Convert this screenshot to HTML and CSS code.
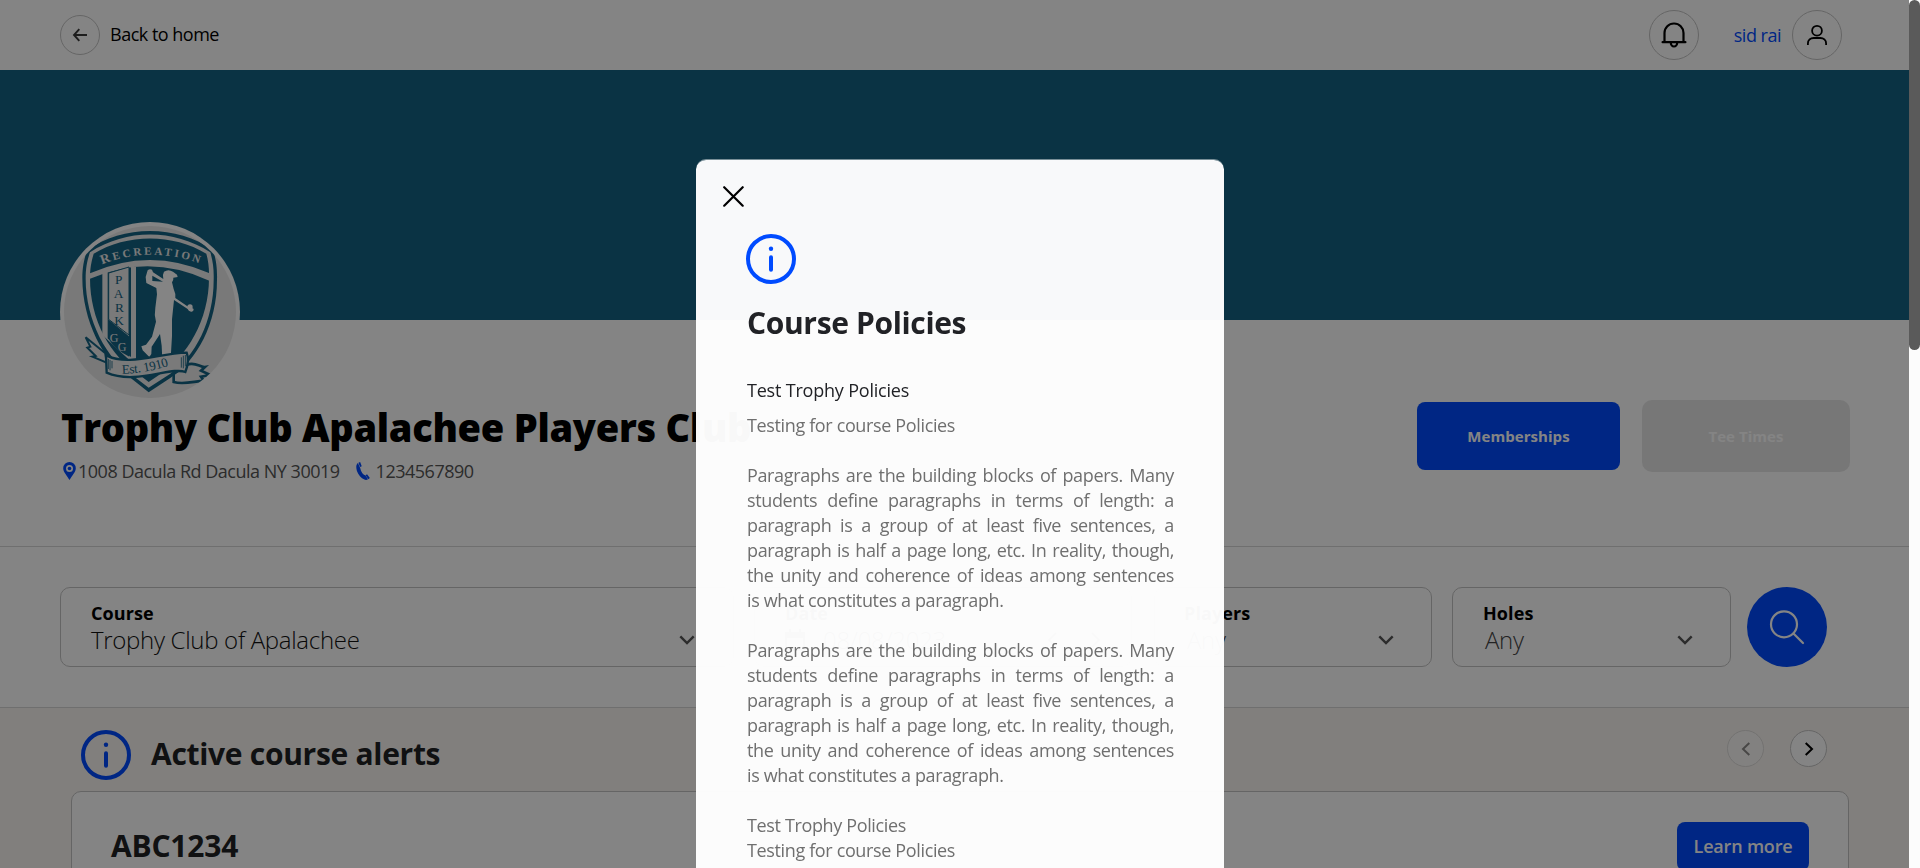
FILE: index.html
```html
<!DOCTYPE html>
<html lang="en">
<head>
<meta charset="utf-8">
<title>Trophy Club Apalachee Players Club</title>
<link rel="stylesheet" href="styles.css">
</head>
<body>
<div class="app">
  <div class="page">
    <header class="topbar">
      <div class="back">
        <span class="ring ring-back"><svg width="16" height="16" viewBox="0 0 16 16"><path d="M7.300 2.200 2 8l5.300 5.800M2 8h13" fill="none" stroke="#3a3a3a" stroke-width="1.900"/></svg></span>
        <span class="back-label">Back to home</span>
      </div>
      <div class="account">
        <span class="ring"><svg width="28" height="30" viewBox="0 0 28 30"><path d="M4.500 22V13a9.500 9.500 0 0 1 19 0v9" fill="none" stroke="#000" stroke-width="2.200"/><path d="M2.600 22.200h22.800" stroke="#000" stroke-width="2.200" stroke-linecap="round"/><path d="M10.800 22.500a3.200 4 0 0 0 6.400 0" fill="none" stroke="#000" stroke-width="2.200"/></svg></span>
        <span class="user-name">sid rai</span>
        <span class="ring"><svg width="24" height="24" viewBox="0 0 24 24"><circle cx="12" cy="7.700" r="4.900" fill="none" stroke="#000" stroke-width="1.800"/><path d="M2.900 22v-1.500c0-3.400 2.500-5.500 5.800-5.500h6.600c3.300 0 5.800 2.100 5.800 5.500V22" fill="none" stroke="#000" stroke-width="1.800"/></svg></span>
      </div>
    </header>

    <div class="hero"></div>

    <section class="club">
      <div class="crest">
        <svg width="180" height="180" viewBox="60 36 540 540">
          <defs>
            <path id="arc" d="M186 163Q330 106 480 161"/>
            <path id="rib" d="M246 491Q318 490 392 466"/>
            <clipPath id="disc"><circle cx="330" cy="306" r="258"/></clipPath>
          </defs>
          <circle cx="330" cy="306" r="270" fill="#fff"/>
          <circle cx="330" cy="306" r="258" fill="#e9e9e9"/>
          <g clip-path="url(#disc)">
            <path d="M326 547 272 504C190 460 127 330 127 205c0-40 8-65 14-84C250 44 410 44 520 121c8 30 12 50 11 90 0 130-60 240-139 292Z" fill="#156483"/>
            <path d="M326 533 280 498C200 450 137 330 137 207c0-32 4-55 13-80C260 56 400 56 511 127c8 28 11 50 10 84 0 120-55 230-130 280Z" fill="#ebebeb"/>
            <path d="M326 516 300 496C210 440 150 330 150 205c0-29 4-50 11-74C260 70 400 70 499 131c6 22 9 45 8 74 0 125-65 235-150 290Z" fill="#156483"/>
            <path d="M150 190Q330 110 509 190l-1 22Q330 128 150 206Z" fill="#ebebeb"/>
            <path d="M187 180h16v205l70 56V170h15v280h-20L187 375Z" fill="#ebebeb"/>
            <path d="M206 189 267 171v208l-61-50Z" fill="#ebebeb"/>
            <path d="M206 189 267 171v204l-61-47Z" fill="none" stroke="#156483" stroke-width="3"/>
            <path d="M204 330 268 408V440Q225 420 204 385Z" fill="#156483"/>
            <path d="M323 181q6-6 13-2l3 8 31 20q-4-12 2-22 13-9 27 0l12 9 2 7-13 2q1 9-4 14l5 20q7 15 5 27l47 32q6-3 8 2 0 8-8 7-8-2-10-8l-41-27-6 58v50l-3 50 8 20q-4 8-14 6l-20-4-2-43-5-35-25 38-1 22-6 9-20-20-4-12 14-5 18-24 12-45q-6-22-2-42l5-40-2-19-30-15-2-18Z" fill="#fff"/>
            <path d="M337 197v16l32 2Z" fill="#156483"/>
            <circle cx="450" cy="291" r="8" fill="#fff"/>
            <path d="M196 430 137 382l14 28-9 3 25 25-10 2 43 18Z" fill="#ebebeb" stroke="#156483" stroke-width="6"/>
            <path d="M440 465c25-12 40 8 55 6l-12 11 28 13-28 5 8 12c-30 2-60 13-90 4v-24Z" fill="#ebebeb" stroke="#156483" stroke-width="8"/>
            <path d="M198 436c70 34 155-6 242-8 8 20 3 40-4 58-40-18-150 40-236 2Z" fill="#ebebeb" stroke="#156483" stroke-width="7"/>
            <path d="M205 447v30M210 450v31M216 453v22M424 442v31M430 437v38M436 435v34" stroke="#156483" stroke-width="2.500"/>
          </g>
          <g class="crest-text">
            <text font-size="40" fill="#ebebeb"><textPath href="#arc" textLength="298">R<tspan font-size="33">ECREATION</tspan></textPath></text>
            <g class="crest-thin" font-size="40" fill="#156483" text-anchor="middle">
              <text x="236" y="223">P</text><text x="236" y="264">A</text><text x="238" y="305">R</text><text x="237" y="346">K</text>
              <text x="222" y="396" fill="#ebebeb" font-size="36">G</text><text x="246" y="424" fill="#ebebeb" font-size="36">G</text>
            </g>
            <text class="crest-thin" font-size="39" fill="#156483"><textPath href="#rib" textLength="143">Est. 1910</textPath></text>
          </g>
        </svg>
      </div>
      <div class="club-row">
        <div class="club-info">
          <h1 class="club-name">Trophy Club Apalachee Players Club</h1>
          <div class="contact">
            <svg class="pin" width="13" height="18" viewBox="0 0 13 18"><path fill-rule="evenodd" d="M6.500 0A6.300 6.300 0 0 0 .2 6.300C.2 10 3.500 13 6.500 18c3-5 6.300-8 6.300-11.700A6.300 6.300 0 0 0 6.500 0Zm0 3a3.500 3.500 0 1 1 0 7 3.500 3.500 0 0 1 0-7Z" fill="#004bff"/><circle cx="6.500" cy="6.500" r="1.800" fill="#004bff"/></svg>
            <span class="address">1008 Dacula Rd Dacula NY 30019</span>
            <svg class="phone" width="14" height="18" viewBox="0 0 14 18"><path d="M3.300.4 4.900 4.600M10.300 12.800l2.800 3.800" stroke="#004bff" stroke-width="1.800"/><path d="M1.900 1C0 2.500-.1 5.600.9 9c1.400 4 4.300 7.300 7.500 8.600 1.400.5 2.600.3 3.600-.3L9.300 13.300c-2.300-.3-4.300-3.500-5.100-7.200Z" fill="#004bff"/></svg>
            <span class="tel">1234567890</span>
          </div>
        </div>
        <div class="club-actions">
          <div class="btn btn-member">Memberships</div>
          <div class="btn btn-tee">Tee Times</div>
        </div>
      </div>
    </section>

    <section class="filters">
      <div class="field field-course">
        <div class="field-label">Course</div>
        <div class="field-line"><span class="value dark">Trophy Club of Apalachee</span><svg class="chev" width="16" height="10" viewBox="0 0 16 10"><path d="m1.300 1.300 6.700 6.700 6.700-6.700" fill="none" stroke="#555" stroke-width="2.400"/></svg></div>
      </div>
      <div class="field field-date">
        <div class="field-label">Date</div>
        <div class="field-line"><svg class="cal" width="20" height="22" viewBox="0 0 20 22"><path d="M1 4h18v17H1Z" fill="none" stroke="#555" stroke-width="2"/><path d="M0 3h20v6H0ZM4 0h2v4H4ZM14 0h2v4h-2Z" fill="#555"/></svg><span class="value dark">08/08/2023</span><span class="date-nav"><svg width="11" height="16" viewBox="0 0 11 16"><path d="m9 1-7 7 7 7" fill="none" stroke="#555" stroke-width="2"/></svg><svg width="11" height="16" viewBox="0 0 11 16"><path d="m2 1 7 7-7 7" fill="none" stroke="#555" stroke-width="2"/></svg></span></div>
      </div>
      <div class="field field-players">
        <div class="field-label">Players</div>
        <div class="field-line"><span class="value any">Any</span><svg class="chev" width="16" height="10" viewBox="0 0 16 10"><path d="m1.300 1.300 6.700 6.700 6.700-6.700" fill="none" stroke="#555" stroke-width="2.400"/></svg></div>
      </div>
      <div class="field field-holes">
        <div class="field-label">Holes</div>
        <div class="field-line"><span class="value any">Any</span><svg class="chev" width="16" height="10" viewBox="0 0 16 10"><path d="m1.300 1.300 6.700 6.700 6.700-6.700" fill="none" stroke="#555" stroke-width="2.400"/></svg></div>
      </div>
      <div class="search"><svg width="36" height="36" viewBox="0 0 36 36"><circle cx="15" cy="15.300" r="13" fill="none" stroke="#fff" stroke-width="2.200"/><path d="m24.500 24.500 9.500 9.500" stroke="#fff" stroke-width="2.200" stroke-linecap="round"/></svg></div>
    </section>

    <section class="alerts">
      <div class="alerts-head">
        <svg class="info" width="50" height="50" viewBox="0 0 50 50"><circle cx="25" cy="25" r="23" fill="none" stroke="#004bff" stroke-width="4"/><circle cx="25" cy="14.700" r="2.200" fill="#004bff"/><path d="M25 23.200v12.600" stroke="#004bff" stroke-width="4" stroke-linecap="round"/></svg>
        <h2 class="alerts-title">Active course alerts</h2>
        <div class="pager">
          <span class="page-btn disabled"><svg width="10" height="14" viewBox="0 0 10 14"><path d="M8.300 1 2 7l6.300 6" fill="none" stroke="#222" stroke-width="2"/></svg></span>
          <span class="page-btn"><svg width="10" height="14" viewBox="0 0 10 14"><path d="M1.700 1 8 7l-6.300 6" fill="none" stroke="#000" stroke-width="2"/></svg></span>
        </div>
      </div>
      <div class="alert-card">
        <div class="alert-name">ABC1234</div>
        <div class="learn">Learn more</div>
      </div>
    </section>
  </div>
  <div class="scroll-track"><div class="scroll-thumb"></div></div>
</div>

<div class="backdrop"></div>
<div class="modal">
  <svg class="close" width="21" height="21" viewBox="0 0 21 21"><path d="m1.200 1.200 18.500 18.500M19.700 1.200 1.200 19.700" stroke="#000" stroke-width="2.200" stroke-linecap="round"/></svg>
  <div class="modal-body">
    <svg class="info" width="50" height="50" viewBox="0 0 50 50"><circle cx="25" cy="25" r="23" fill="none" stroke="#004bff" stroke-width="4"/><circle cx="25" cy="14.700" r="2.200" fill="#004bff"/><path d="M25 23.200v12.600" stroke="#004bff" stroke-width="4" stroke-linecap="round"/></svg>
    <h2 class="modal-title">Course Policies</h2>
    <div class="policy-name">Test Trophy Policies</div>
    <div class="policy-text">
      <p>Testing for course Policies</p>
      <p>Paragraphs are the building blocks of papers. Many students define paragraphs in terms of length: a paragraph is a group of at least five sentences, a paragraph is half a page long, etc. In reality, though, the unity and coherence of ideas among sentences is&nbsp;what constitutes a paragraph.</p>
      <p>Paragraphs are the building blocks of papers. Many students define paragraphs in terms of length: a paragraph is a group of at least five sentences, a paragraph is half a page long, etc. In reality, though, the unity and coherence of ideas among sentences is&nbsp;what constitutes a paragraph.</p>
      <p>Test Trophy Policies<br>Testing for course Policies</p>
    </div>
  </div>
</div>
</body>
</html>
```
FILE: styles.css
```css
* { box-sizing: border-box; }
html, body { margin: 0; height: 868px; overflow: hidden; }
body { font-family: "Open Sans", "Noto Sans", sans-serif; color: #000; background: #fff; }
h1, h2, p { margin: 0; }
svg { display: block; flex: none; }

.app { display: flex; height: 868px; overflow: hidden; }
.page { width: 1909px; flex: none; }
.scroll-track { width: 11px; background: #fcfcfc; }
.scroll-thumb { height: 350px; border-radius: 6px; background: #5a5a5a; }

.topbar { height: 70px; padding: 0 67px 0 60px; display: flex; align-items: center; justify-content: space-between; }
.back { display: flex; align-items: center; gap: 10px; }
.back-label { font-size: 18px; font-weight: 400; letter-spacing: -0.5px; line-height: 24px; padding-bottom: 2px; }
.ring { width: 50px; height: 50px; border: 1px solid #c4c4c4; border-radius: 50%; display: flex; align-items: center; justify-content: center; }
.ring-back { width: 40px; height: 40px; }
.account { display: flex; align-items: center; }
.user-name { margin: 0 11px 0 35px; font-size: 18px; font-weight: 400; color: #004bff; letter-spacing: -0.5px; line-height: 24px; }

.hero { height: 250px; background: #156483; }

.club { height: 227px; border-bottom: 1px solid #d6d6d6; padding: 0 59px 0 60px; }
.crest { height: 80px; }
.crest svg { position: relative; top: -98px; }
.crest-text { font-family: "Liberation Serif", serif; font-weight: 700; }
.crest-thin { font-weight: 400; }
.club-row { display: flex; justify-content: space-between; align-items: flex-start; }
.club-name { font-size: 38px; font-weight: 800; line-height: 52px; padding: 1px 0 0 1px; letter-spacing: -0.27px; white-space: nowrap; }
.contact { display: flex; align-items: center; height: 36px; padding-left: 3px; color: #555; font-size: 18px; letter-spacing: -0.49px; }
.pin { margin-right: 2px; }
.phone { margin: 0 6px 0 16px; }
.club-actions { display: flex; align-items: center; gap: 22px; }
.btn { display: flex; align-items: center; justify-content: center; border-radius: 8px; font-size: 15px; font-weight: 700; color: #fff; letter-spacing: 0.05px; }
.btn-member { width: 203px; height: 68px; background: #004bff; }
.btn-tee { width: 208px; height: 72px; background: #e6e6e6; border-radius: 10px; }

.filters { height: 161px; display: flex; align-items: center; padding: 0 0 0 60px; border-bottom: 1px solid #d6d6d6; }
.field { height: 80px; border: 1px solid #c4c4c4; border-radius: 10px; padding: 12px 30px 0; }
.field-course { width: 674px; margin-right: 20px; }
.field-date { width: 378px; margin-right: 22px; }
.field-players { width: 278px; margin-right: 20px; }
.field-holes { width: 279px; margin-right: 16px; }
.field-label { font-size: 18px; font-weight: 700; line-height: 26px; letter-spacing: 0.1px; }
.field-players .field-label { margin-left: -1px; }
.field-line { display: flex; align-items: center; height: 28px; }
.value { font-size: 24px; line-height: 28px; font-weight: 300; letter-spacing: -0.3px; color: #444; }
.value.dark { color: #111; }
.value.any { padding-left: 2px; }
.chev { margin-left: auto; margin-right: 8px; }
.field-players .chev, .field-holes .chev { margin-right: 7px; }
.cal { margin-right: 18px; }
.date-nav { margin-left: auto; display: flex; gap: 32px; }
.search { width: 80px; height: 80px; border-radius: 50%; background: #004bff; display: flex; align-items: center; justify-content: center; }

.alerts { height: 400px; background: #f9f5f1; padding: 22px 60px 0 71px; }
.alerts-head { display: flex; align-items: center; height: 61px; padding: 0 22px 11px 10px; }
.alerts-title { margin-left: 20px; font-size: 30px; font-weight: 700; line-height: 40px; letter-spacing: -0.3px; color: #202124; padding-bottom: 2px; }
.pager { margin-left: auto; display: flex; gap: 26px; padding-bottom: 13px; }
.page-btn { width: 37px; height: 37px; border-radius: 50%; border: 1px solid #c4c4c4; background: #fff; display: flex; align-items: center; justify-content: center; }
.page-btn.disabled { opacity: 0.5; }
.alert-card { height: 300px; border: 1px solid #c4c4c4; border-radius: 10px; background: #fff; padding: 30px 39px 0; display: flex; justify-content: space-between; align-items: flex-start; }
.alert-name { font-size: 30px; font-weight: 700; line-height: 48px; letter-spacing: -0.2px; color: #202124; }
.learn { width: 132px; height: 49px; border-radius: 8px; background: #004bff; color: #fff; font-size: 18px; letter-spacing: -0.2px; font-weight: 600; display: flex; align-items: center; justify-content: center; padding-bottom: 2px; }

.backdrop { position: fixed; top: 0; left: 0; width: 1909px; height: 868px; background: rgba(0, 0, 0, 0.483); }
.modal { position: fixed; top: 159px; left: 696px; width: 528px; height: 709px; overflow: hidden; border-top: 1px solid rgba(255, 255, 255, 0.45); border-radius: 10px 10px 0 0; background: rgba(255, 255, 255, 0.973); background-clip: padding-box; }
.close { margin: 26px 0 27px 27px; }
.modal-body { padding: 0 50px; color: #212226; }
.modal-title { margin: 19px 0 0 1px; font-size: 30px; font-weight: 700; line-height: 40px; letter-spacing: -0.35px; }
.policy-name { margin: 35px 0 10px 1px; font-size: 18px; font-weight: 500; line-height: 25px; letter-spacing: -0.2px; }
.policy-text { margin-left: 1px; font-size: 18px; line-height: 25px; color: #6f6f6f; text-align: justify; letter-spacing: -0.36px; }
.policy-text p { margin-bottom: 25px; }
```
